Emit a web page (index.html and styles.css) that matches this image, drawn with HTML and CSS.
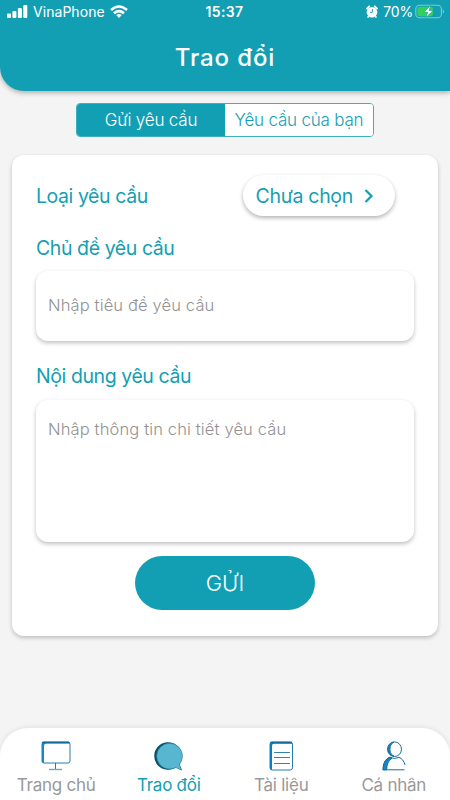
FILE: index.html
```html
<!DOCTYPE html>
<html lang="vi">
<head>
<meta charset="utf-8">
<meta name="viewport" content="width=device-width, initial-scale=1">
<title>Trao đổi</title>
<link rel="stylesheet" href="styles.css">
</head>
<body>
<div class="screen">
  <header class="header">
    <div class="status">
      <div class="status-left">
        <svg width="21" height="14" viewBox="0 0 21 14" fill="#fff"><rect x="0" y="8.5" width="4" height="4.5" rx="1"/><rect x="5.4" y="6" width="4" height="7" rx="1"/><rect x="10.9" y="3" width="4" height="10" rx="1"/><rect x="16.3" y="0" width="4" height="13" rx="1"/></svg>
        <span class="carrier">VinaPhone</span>
        <svg class="wifi" width="18" height="14" viewBox="0 0 18 14" fill="none" stroke="#fff" stroke-width="2.5"><path d="M1 5Q9-1.9 17 5M4 8.2Q9 4 14 8.2"/><path d="M6.2 10.1Q9 7.9 11.8 10.1L9 13Z" fill="#fff" stroke="none"/></svg>
      </div>
      <span class="clock">15:37</span>
      <div class="status-right">
        <svg width="12" height="14" viewBox="0 0 12 14"><circle cx="6" cy="7.2" r="5.3" fill="#fff"/><path d="M.9 3.6L3.3 1.3M8.7 1.3l2.4 2.3" stroke="#fff" stroke-width="1.8" stroke-linecap="round"/><path d="M2.6 11.2l-1 1.4M9.4 11.2l1 1.4" stroke="#fff" stroke-width="1.6"/><path d="M6.4 4V7.4H4" fill="none" stroke="#139fb3" stroke-width=".9"/></svg>
        <span class="percent">70%</span>
        <svg width="30" height="16" viewBox="0 0 30 16"><rect x=".8" y="1.2" width="25.6" height="12.6" rx="3.8" fill="none" stroke="#7fc9d4" stroke-width="1.1"/><path d="M27.8 5.2q2.5 2.3 0 4.6z" fill="#7fc9d4"/><rect x="2.4" y="2.8" width="15.6" height="9.4" rx="2.2" fill="#30d158"/><path d="M15.7 1.3L8.8 8.3h4L10.8 13.7 18.2 6.6h-4.1z" fill="#fff" stroke="#139fb3" stroke-width=".7"/></svg>
      </div>
    </div>
    <h1 class="title">Trao đổi</h1>
  </header>

  <main class="content">
    <div class="tabs">
      <button class="tab tab-active"><span>Gửi yêu cầu</span></button>
      <button class="tab"><span>Yêu cầu của bạn</span></button>
    </div>
    <form class="card">
      <div class="type-row">
        <span class="label label-type">Loại yêu cầu</span>
        <button type="button" class="picker"><span>Chưa chọn</span><svg width="10" height="16" viewBox="0 0 10 16" fill="none" stroke="#139fb3" stroke-width="2.2"><path d="M1.5 2l6 6-6 6"/></svg></button>
      </div>
      <span class="label label-subject">Chủ đề yêu cầu</span>
      <div class="field field-subject"><span>Nhập tiêu đề yêu cầu</span></div>
      <span class="label label-body">Nội dung yêu cầu</span>
      <div class="field field-body"><span>Nhập thông tin chi tiết yêu cầu</span></div>
      <button type="button" class="submit">GỬI</button>
    </form>
  </main>

  <nav class="nav">
    <a class="nav-item nav-home">
      <svg width="30" height="30" viewBox="0 0 30 30" fill="none"><rect x="1" y="1" width="28" height="21" rx="2" stroke="#267ca6"/><path d="M1 20V3Q1 1 3 1H29V2.5H5Q3 2.5 3 5V22Q1 22 1 20Z" fill="#1685c9"/><path d="M1 1.5H28" stroke="#116b9e" stroke-width="1.6"/><path d="M14.5 22V28" stroke="#267ca6"/><path d="M8 28.5H21" stroke="#72a9bc" stroke-width="1.4"/></svg>
      <span>Trang chủ</span>
    </a>
    <a class="nav-item nav-chat nav-active">
      <svg width="30" height="30" viewBox="0 0 30 30"><circle cx="14" cy="15" r="13.8" fill="#07516a"/><path d="M22 26.5L27.5 29 25.2 23Z" fill="#58b6d0" stroke="#116b87" stroke-width=".8"/><circle cx="15.6" cy="15.2" r="12.9" fill="#58b6d0" stroke="#207f99" stroke-width=".6"/><path d="M21 26L26.6 28.2 24.4 22Z" fill="#58b6d0"/></svg>
      <span>Trao đổi</span>
    </a>
    <a class="nav-item nav-docs">
      <svg width="30" height="30" viewBox="0 0 30 30" fill="none"><rect x="4" y="1" width="22.5" height="28" rx="2.2" stroke="#267ca6"/><path d="M4 27V3Q4 1 6 1H26V2.8H8Q6 2.8 6 5V29Q4 29 4 27Z" fill="#087fc4"/><path d="M4.5 1.5H26" stroke="#116b9e" stroke-width="1.5"/><path d="M8 11.5H24M8 16.5H24M8 22.5H24" stroke="#3283ad"/></svg>
      <span>Tài liệu</span>
    </a>
    <a class="nav-item nav-user">
      <svg width="30" height="30" viewBox="0 0 30 30" fill="none" stroke="#14709c"><ellipse cx="15.5" cy="8.2" rx="7" ry="7.3"/><path d="M15 1A7.3 7.3 0 0 0 15 15.3Q9.8 12.8 11.2 5.5 12 2.3 15 1Z" fill="#1685c9"/><path d="M26 24Q24.5 18 20 16.3 15.5 18.8 11 16.2 4.2 18.3 4 28.8H25.5"/><path d="M11 16.2Q4.2 18.3 4 28.8H7.7Q7.5 21 13 17Z" fill="#1685c9"/></svg>
      <span>Cá nhân</span>
    </a>
  </nav>
</div>
</body>
</html>
```
FILE: styles.css
```css
* { box-sizing: border-box; }
body { margin: 0; background: #f4f4f4; font-family: Inter, "Liberation Sans", sans-serif; }
button { font: inherit; border: 0; padding: 0; margin: 0; }
svg { display: block; flex: none; }
span { white-space: nowrap; }

.screen { width: 450px; height: 800px; display: flex; flex-direction: column; background: #f4f4f4; overflow: hidden; }

.header { height: 91px; flex: none; background: #139fb3; color: #fff; border-bottom-left-radius: 24px; box-shadow: 0 2px 5px rgba(0, 0, 0, .28); }
.status { height: 24px; padding: 0 7px; display: grid; grid-template-columns: 1fr auto 1fr; align-items: center; font-size: 14px; line-height: 24px; }
.status-left, .status-right { display: flex; align-items: center; }
.status-right { justify-content: flex-end; margin-right: -2px; }
.carrier { margin-left: 5px; letter-spacing: .05px; }
.wifi { margin-left: 5px; }
.clock { font-weight: 600; letter-spacing: .35px; margin-left: -1px; }
.percent { margin: 0 2px 0 5px; letter-spacing: -.2px; }
.title { margin: 17px 0 0; text-align: center; font-size: 24px; line-height: 34px; font-weight: 500; letter-spacing: .9px; }

.content { flex: 1; display: flex; flex-direction: column; align-items: center; padding-top: 12px; }
.tabs { width: 298px; height: 34px; display: flex; border: 1px solid #3fafbf; border-radius: 4px; overflow: hidden; background: #fff; }
.tab { flex: 1; background: #fff; color: #139fb3; font-size: 17px; font-weight: 300; letter-spacing: -.2px; }
.tab-active { background: #139fb3; color: #fff; }

.card { width: 426px; height: 481px; margin-top: 18px; padding: 20px 24px 0; display: flex; flex-direction: column; background: #fff; border-radius: 12px; box-shadow: 0 2px 4px rgba(0, 0, 0, .22); }
.type-row { display: flex; align-items: center; justify-content: space-between; height: 41px; padding-right: 19px; }
.label { color: #139fb3; font-size: 19.5px; line-height: 28px; letter-spacing: -.42px; }
.picker { width: 152px; height: 41px; padding-left: 12.5px; display: flex; align-items: center; gap: 11px; border-radius: 21px; background: #fff; color: #139fb3; font-size: 19.5px; letter-spacing: -.3px; box-shadow: 0 2px 4px rgba(0, 0, 0, .3); }
.label-subject { margin-top: 18px; }
.field { border-radius: 12px; background: #fff; color: #929292; font-size: 16.5px; font-weight: 300; line-height: 24px; letter-spacing: .14px; padding-left: 12px; box-shadow: 0 2px 4px rgba(0, 0, 0, .25); }
.field-subject { height: 70px; margin-top: 9px; padding-top: 22px; }
.label-body { margin-top: 21px; }
.field-body { height: 142px; margin-top: 10px; padding-top: 17px; }
.submit { width: 180px; height: 54px; margin-top: 14px; align-self: center; border-radius: 27px; background: #139fb3; color: #fff; font-size: 22px; font-weight: 300; }

.nav { height: 72px; flex: none; padding-top: 13px; display: grid; grid-template-columns: repeat(4, 1fr); background: #fff; border-radius: 28px 28px 0 0; box-shadow: 0 -1px 5px rgba(0, 0, 0, .08); }
.nav-item { display: flex; flex-direction: column; align-items: center; gap: 2px; color: #999; font-size: 17px; line-height: 25px; letter-spacing: -.25px; }
.nav-active { color: #139fb3; }
```
